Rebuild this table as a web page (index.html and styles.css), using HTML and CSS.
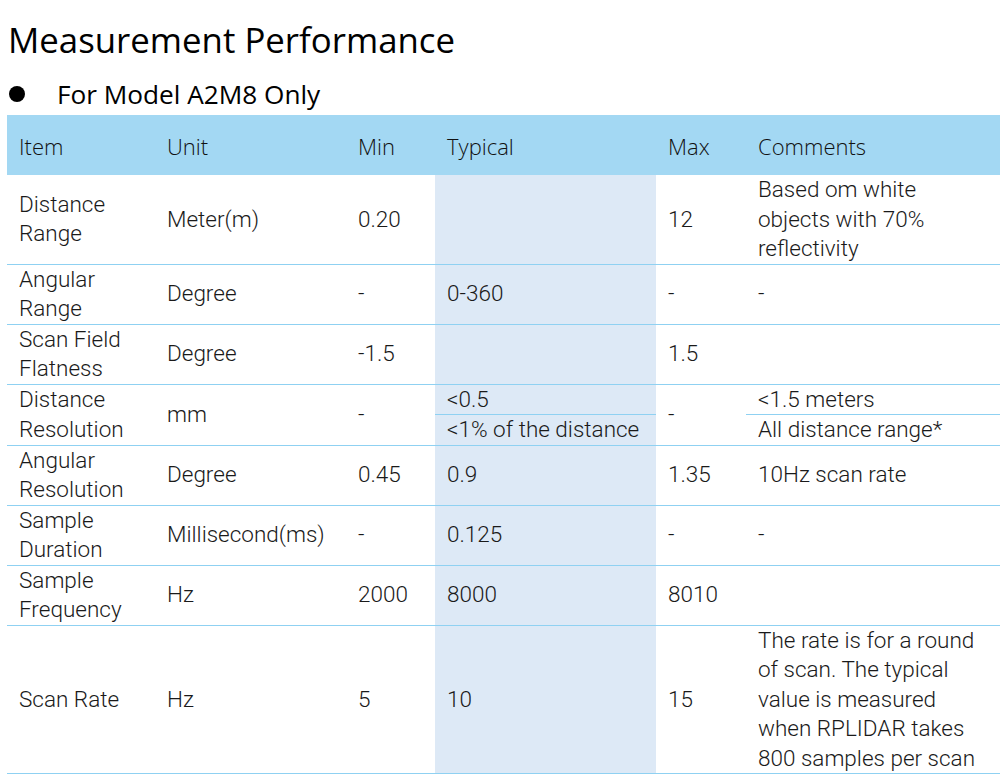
FILE: index.html
```html
<!DOCTYPE html>
<html lang="en">
<head>
<meta charset="utf-8">
<title>Measurement Performance</title>
<link rel="stylesheet" href="styles.css">
</head>
<body>
<main class="page">
  <h1 class="title">Measurement Performance</h1>
  <div class="subtitle"><span class="bullet"></span><span>For Model A2M8 Only</span></div>
  <table class="spec">
    <colgroup>
      <col class="c-item"><col class="c-unit"><col class="c-min"><col class="c-typ"><col class="c-max"><col class="c-com">
    </colgroup>
    <thead>
      <tr><th>Item</th><th>Unit</th><th>Min</th><th>Typical</th><th>Max</th><th>Comments</th></tr>
    </thead>
    <tbody>
      <tr>
        <td>Distance<br>Range</td><td>Meter(m)</td><td>0.20</td><td class="typ"></td><td>12</td>
        <td>Based om white<br>objects with 70%<br>reflectivity</td>
      </tr>
      <tr>
        <td>Angular<br>Range</td><td>Degree</td><td>-</td><td class="typ">0-360</td><td>-</td><td>-</td>
      </tr>
      <tr>
        <td>Scan Field<br>Flatness</td><td>Degree</td><td>-1.5</td><td class="typ"></td><td>1.5</td><td></td>
      </tr>
      <tr class="split">
        <td rowspan="2">Distance<br>Resolution</td><td rowspan="2">mm</td><td rowspan="2">-</td>
        <td class="typ sub">&lt;0.5</td><td rowspan="2">-</td><td class="sub">&lt;1.5 meters</td>
      </tr>
      <tr>
        <td class="typ">&lt;1% of the distance</td><td>All distance range*</td>
      </tr>
      <tr>
        <td>Angular<br>Resolution</td><td>Degree</td><td>0.45</td><td class="typ">0.9</td><td>1.35</td><td>10Hz scan rate</td>
      </tr>
      <tr>
        <td>Sample<br>Duration</td><td>Millisecond(ms)</td><td>-</td><td class="typ">0.125</td><td>-</td><td>-</td>
      </tr>
      <tr>
        <td>Sample<br>Frequency</td><td>Hz</td><td>2000</td><td class="typ">8000</td><td>8010</td><td></td>
      </tr>
      <tr>
        <td>Scan Rate</td><td>Hz</td><td>5</td><td class="typ">10</td><td>15</td>
        <td>The rate is for a round<br>of scan. The typical<br>value is measured<br>when RPLIDAR takes<br>800 samples per scan</td>
      </tr>
    </tbody>
  </table>
</main>
</body>
</html>
```

FILE: styles.css
```css
html, body {
  margin: 0;
  padding: 0;
  background: #ffffff;
}

.page {
  padding: 0 0 0 7px;
  color: #111;
}

.title {
  margin: 0;
  padding-top: 17px;
  padding-left: 1px;
  font-family: "Open Sans", "Noto Sans", sans-serif;
  font-weight: 400;
  font-size: 34.8px;
  line-height: 46px;
  color: #000;
}

.subtitle {
  display: flex;
  align-items: center;
  gap: 32px;
  margin-top: 14px;
  padding-left: 2px;
  font-family: "Open Sans", "Noto Sans", sans-serif;
  font-size: 26.2px;
  line-height: 34px;
  color: #000;
}

.bullet {
  width: 16px;
  height: 16px;
  border-radius: 50%;
  background: #000;
  flex: none;
}

.spec {
  margin-top: 4px;
  width: 993px;
  border-collapse: collapse;
  table-layout: fixed;
}

.c-item { width: 148px; }
.c-unit { width: 191px; }
.c-min { width: 89px; }
.c-typ { width: 221px; }
.c-max { width: 90px; }
.c-com { width: 254px; }

.spec th {
  background: #a3d8f3;
  font-family: "Open Sans", "Noto Sans", sans-serif;
  font-weight: 300;
  font-size: 22px;
  line-height: 30px;
  color: #111;
  text-align: left;
  padding: 16px 12px 14px;
}

.spec td {
  font-family: Roboto, "Noto Sans", sans-serif;
  font-weight: 300;
  font-size: 22.5px;
  line-height: 29.5px;
  color: #1a1a1a;
  text-align: left;
  vertical-align: middle;
  padding: 0 12px;
  border-bottom: 1px solid #8fd1f2;
  white-space: nowrap;
}

.spec td.typ {
  background: #dde9f6;
}

.spec td.sub {
  border-bottom: 1px solid #8fd1f2;
}
```
